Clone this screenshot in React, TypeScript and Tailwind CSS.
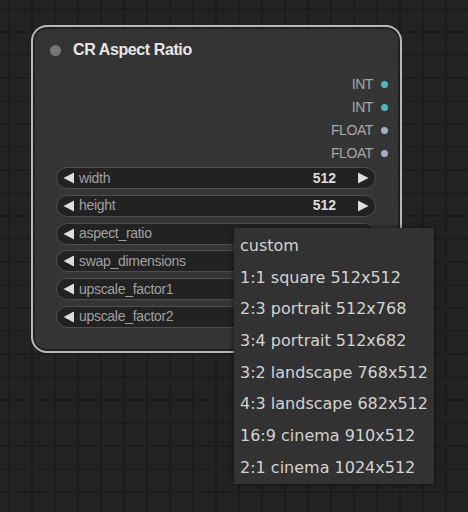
import React from 'react';

const outputs = [
  { label: 'INT', color: 'bg-[#4cb6b6]' },
  { label: 'INT', color: 'bg-[#4cb6b6]' },
  { label: 'FLOAT', color: 'bg-[#a9a9c9]' },
  { label: 'FLOAT', color: 'bg-[#a9a9c9]' },
];

const widgets = [
  { name: 'width', value: '512' },
  { name: 'height', value: '512' },
  { name: 'aspect_ratio', value: '' },
  { name: 'swap_dimensions', value: '' },
  { name: 'upscale_factor1', value: '' },
  { name: 'upscale_factor2', value: '' },
];

const options = [
  'custom',
  '1:1 square 512x512',
  '2:3 portrait 512x768',
  '3:4 portrait 512x682',
  '3:2 landscape 768x512',
  '4:3 landscape 682x512',
  '16:9 cinema 910x512',
  '2:1 cinema 1024x512',
];

const ArrowLeft = () => (
  <svg width="12" height="12" viewBox="0 0 12 12" className="shrink-0">
    <path d="M11 0.5 L0.5 6 L11 11.5 Z" fill="#dddddd" />
  </svg>
);

const ArrowRight = () => (
  <svg width="12" height="12" viewBox="0 0 12 12" className="shrink-0">
    <path d="M1 0.5 L11.5 6 L1 11.5 Z" fill="#dddddd" />
  </svg>
);

export default function App() {
  return (
    <div className="relative w-[468px] h-[512px] overflow-hidden bg-[#232323] bg-[linear-gradient(to_right,#1c1c1c_2px,transparent_2px),linear-gradient(to_bottom,#1c1c1c_2px,transparent_2px)] [background-size:23px_23px] [background-position:8px_8px] font-['Liberation_Sans',Arial,sans-serif]">
      {/* node with selection outline */}
      <div className="absolute left-[31px] top-[25px] w-[371px] h-[328px] rounded-[16px] border-2 border-[#b8b8b8] p-[2px]">
        <div className="w-full h-full rounded-[12px] bg-[#353535] flex flex-col overflow-hidden">
          <div className="h-[40px] shrink-0 bg-[#333333] flex items-center pt-[3px] pl-[15px] border-b border-[#2e2e2e]">
            <div className="w-[11px] h-[11px] rounded-full bg-[#777777]" />
            <span className="ml-[12px] text-[16px] font-bold text-[#e6e6e6] tracking-[-0.4px]">CR Aspect Ratio</span>
          </div>

          <div className="flex flex-col pt-[4px] pr-[10px]">
            {outputs.map((o, i) => (
              <div key={i} className="h-[23px] flex items-center justify-end">
                <span className="text-[14px] text-[#a8a8a8] tracking-[-0.4px]">{o.label}</span>
                <div className={`ml-[8px] w-[7px] h-[7px] rounded-full ${o.color}`} />
              </div>
            ))}
          </div>

          <div className="flex flex-col gap-[5.8px] pt-[2px] pl-[21px] pr-[22px]">
            {widgets.map(w => (
              <div
                key={w.name}
                className="h-[22px] rounded-full bg-[#222222] border border-[#4e4e4e] flex items-center pl-[6px] pr-[6px]"
              >
                <ArrowLeft />
                <span className="ml-[4px] text-[14px] text-[#a0a0a0] tracking-[-0.3px]">{w.name}</span>
                <div className="flex-1" />
                {w.value && (
                  <>
                    <span className="text-[14px] font-bold text-[#dddddd]">{w.value}</span>
                    <span className="ml-[21px]"><ArrowRight /></span>
                  </>
                )}
              </div>
            ))}
          </div>
        </div>
      </div>

      {/* dropdown menu */}
      <div className="absolute left-[234px] top-[228px] w-[200px] pt-[2px] bg-[#323232] shadow-[0_0_6px_rgba(0,0,0,0.6)] font-['DejaVu_Sans',sans-serif]">
        {options.map(opt => (
          <div key={opt} className="h-[31.7px] flex items-center pl-[6px] text-[16px] text-[#d2d2d2]">
            {opt}
          </div>
        ))}
      </div>
    </div>
  );
}
